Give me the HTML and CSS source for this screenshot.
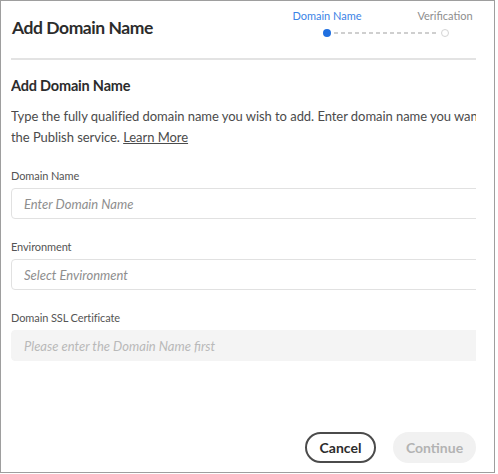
FILE: index.html
```html
<!DOCTYPE html>
<html lang="en">
<head>
<meta charset="utf-8">
<title>Add Domain Name</title>
<link rel="stylesheet" href="styles.css">
</head>
<body>
<div class="modal">
  <div class="viewport">
    <header class="head">
      <h1 class="title">Add Domain Name</h1>
      <div class="stepper">
        <span class="step-label active">Domain Name</span>
        <span class="step-label">Verification</span>
        <div class="track">
          <span class="dot dot-active"></span>
          <span class="dash"></span>
          <span class="dot dot-idle"></span>
        </div>
      </div>
    </header>
    <section class="content">
      <h2 class="section-title">Add Domain Name</h2>
      <p class="desc">Type the fully qualified domain name you wish to add. Enter domain name you want to add to<br>the Publish service. <a class="link" href="#">Learn More</a></p>
      <div class="field">
        <label class="label" for="dn">Domain Name</label>
        <input class="input" id="dn" type="text" placeholder="Enter Domain Name">
      </div>
      <div class="field">
        <label class="label" for="env">Environment</label>
        <input class="input" id="env" type="text" readonly placeholder="Select Environment">
      </div>
      <div class="field">
        <label class="label" for="ssl">Domain SSL Certificate</label>
        <input class="input input-disabled" id="ssl" type="text" disabled placeholder="Please enter the Domain Name first">
      </div>
    </section>
  </div>
  <footer class="footer">
    <button class="btn btn-secondary" type="button">Cancel</button>
    <button class="btn btn-disabled" type="button" disabled>Continue</button>
  </footer>
</div>
</body>
</html>
```
FILE: styles.css
```css
* { box-sizing: border-box; }
html, body { margin: 0; padding: 0; background: #fff; }
body { font-family: Lato, "Open Sans", sans-serif; color: #2c2c2c; }

.modal {
  width: 495px;
  height: 473px;
  border: 1px solid #9e9e9e;
  display: flex;
  flex-direction: column;
  padding: 0 18px 9px 10px;
}

.viewport {
  width: 465px;
  overflow: hidden;
}

.head {
  display: flex;
  justify-content: space-between;
  align-items: flex-start;
  padding: 7px 0 18px;
  border-bottom: 2px solid #e3e3e3;
}

.title {
  margin: 8px 0 0 1px;
  font-size: 17.5px;
  letter-spacing: -0.45px;
  line-height: 24px;
  font-weight: 700;
  color: #2c2c2c;
}

.stepper {
  display: grid;
  grid-template-columns: 60px 60px;
  column-gap: 58px;
  justify-items: center;
  margin-right: 1px;
}

.step-label {
  font-size: 11px;
  line-height: 16px;
  color: #8e8e8e;
  white-space: nowrap;
}
.step-label.active { color: #3b83e6; }

.track {
  grid-column: 1 / -1;
  justify-self: stretch;
  display: flex;
  align-items: center;
  padding: 0 26px;
  margin-top: 5px;
}

.dot {
  width: 8px;
  height: 8px;
  border-radius: 50%;
  flex: none;
}
.dot-active { background: #1f6fe0; }
.dot-idle { border: 1.5px solid #d4d4d4; }

.dash {
  flex: 1;
  height: 1.5px;
  margin: 0 3px;
  background: repeating-linear-gradient(to right, #cfcfcf 0 4px, transparent 4px 7px);
}

.content {
  width: 560px;
}

.section-title {
  margin: 16px 0 0;
  font-size: 14.5px;
  letter-spacing: -0.2px;
  line-height: 20px;
  font-weight: 700;
  color: #2c2c2c;
}

.desc {
  margin: 10px 0 0;
  font-size: 13px;
  letter-spacing: -0.05px;
  line-height: 21px;
  color: #4b4b4b;
  white-space: nowrap;
}

.link {
  color: #4b4b4b;
  text-decoration: underline;
}

.field {
  display: flex;
  flex-direction: column;
  margin-top: 19px;
}

.label {
  font-size: 11px;
  letter-spacing: -0.1px;
  line-height: 17px;
  color: #555;
  margin-bottom: 4px;
}

.input {
  height: 31px;
  width: 100%;
  border: 1px solid #e1e1e1;
  border-radius: 4px;
  padding: 0 12px;
  font-family: Lato, "Open Sans", sans-serif;
  font-size: 13px;
  font-style: italic;
  color: #2c2c2c;
  background: #fff;
  outline: none;
}
.input::placeholder { color: #8e8e8e; font-style: italic; }

.input-disabled {
  background: #f4f4f4;
  border-color: #f4f4f4;
}
.input-disabled::placeholder { color: #b9b9b9; }

.footer {
  margin-top: auto;
  display: flex;
  justify-content: flex-end;
  gap: 17px;
}

.btn {
  height: 31px;
  padding: 0 10px;
  border-radius: 16px;
  font-family: Lato, "Open Sans", sans-serif;
  font-size: 14px;
  font-weight: 700;
  cursor: pointer;
}

.btn-secondary {
  min-width: 71px;
  background: #fff;
  border: 2px solid #4b4b4b;
  color: #2c2c2c;
}

.btn-disabled {
  min-width: 83px;
  background: #f1f1f1;
  border: 2px solid #f1f1f1;
  color: #b3b3b3;
}
```
